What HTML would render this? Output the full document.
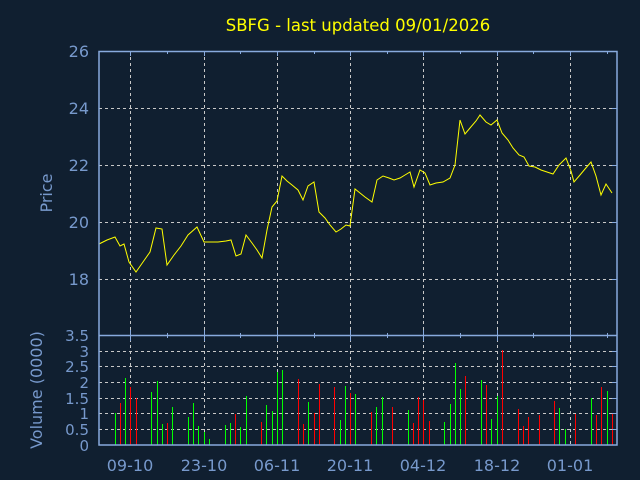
<!DOCTYPE html>
<html><head><meta charset="utf-8"><style>
html,body{margin:0;padding:0;background:#101f30;}
svg{display:block}
text{font-family:"DejaVu Sans","Liberation Sans",sans-serif;}
</style></head><body>
<svg width="640" height="480" viewBox="0 0 640 480" xmlns="http://www.w3.org/2000/svg">
<rect width="640" height="480" fill="#101f30"/>
<text x="358" y="31" fill="#ffff00" font-size="16.5" text-anchor="middle">SBFG - last updated 09/01/2026</text>
<g stroke="#c8c8c8" stroke-width="1" stroke-dasharray="3,3">
<path d="M99 108.5H617M99 165.5H617M99 222.5H617M99 279.5H617"/>
<path d="M99 351.5H617M99 366.5H617M99 382.5H617M99 398.5H617M99 413.5H617M99 429.5H617"/>
<path d="M130.5 51V445M204.5 51V445M277.5 51V445M350.5 51V445M423.5 51V445M497.5 51V445M570.5 51V445"/>
</g>
<g stroke="#00ff00" stroke-width="1">
<path d="M115.5 445V413M125.5 445V378M151.5 445V392M157.5 445V381M162.5 445V424M172.5 445V407M188.5 445V417M193.5 445V403M198.5 445V426M204.5 445V432M209.5 445V439M225.5 445V425M230.5 445V423M240.5 445V427M246.5 445V396M266.5 445V405M272.5 445V411M277.5 445V372M282.5 445V370M308.5 445V402M340.5 445V420M345.5 445V386M355.5 445V394M376.5 445V407M382.5 445V397M408.5 445V410M444.5 445V422M450.5 445V404M455.5 445V363M460.5 445V389M481.5 445V380M491.5 445V419M497.5 445V396M559.5 445V408M565.5 445V429M591.5 445V398M607.5 445V391"/>
</g>
<g stroke="#ff0000" stroke-width="1">
<path d="M120.5 445V403M130.5 445V387M136.5 445V398M167.5 445V423M235.5 445V414M261.5 445V422M298.5 445V379M303.5 445V424M314.5 445V413M319.5 445V384M334.5 445V387M350.5 445V393M371.5 445V412M392.5 445V407M413.5 445V423M418.5 445V397M423.5 445V400M429.5 445V421M465.5 445V376M486.5 445V385M502.5 445V350M518.5 445V409M523.5 445V426M528.5 445V417M539.5 445V415M554.5 445V401M575.5 445V414M596.5 445V415M601.5 445V387M612.5 445V414"/>
</g>
<polyline fill="none" stroke="#ffff00" stroke-width="1" points="99,244 107,240 115,237 120,246 124,244 129,262 136,272 143,262 150,252 156,228 162,229 167,265 174,255 181,246 188,235 197,227 204,242 211,242 218,242 226,241 231,240 236,256 241,254 246,235 252,243 257,250 262,258 267,230 272,207 277,201 282,176 287,181 292,185 298,190 303,200 308,186 314,182 319,212 325,218 330,225 336,232 341,229 346,225 350,226 355,189 360,193 365,197 372,202 377,180 383,176 389,178 394,180 400,178 405,175 410,172 414,187 420,170 425,173 430,185 436,183 443,182 450,178 455,165 460,120 465,134 470,128 476,121 480,115 486,122 491,125 497,120 502,133 508,140 513,148 519,155 524,157 529,166 535,167 541,170 547,172 553,174 559,165 566,158 571,171 574,182 580,175 585,169 591,162 596,176 601,195 606,184 612,193"/>
<g stroke="#88aadd" stroke-width="1.5" fill="none">
<rect x="99" y="51.5" width="518" height="393.5"/>
<path d="M99 335.5H617"/>
</g>
<g stroke="#88aadd" stroke-width="1">
<path d="M130.5 51V56M167.5 51V54M204.5 51V56M240.5 51V54M277.5 51V56M314.5 51V54M350.5 51V56M387.5 51V54M423.5 51V56M460.5 51V54M497.5 51V56M533.5 51V54M570.5 51V56M607.5 51V54"/>
<path d="M130.5 330V341M167.5 333V338M204.5 330V341M240.5 333V338M277.5 330V341M314.5 333V338M350.5 330V341M387.5 333V338M423.5 330V341M460.5 333V338M497.5 330V341M533.5 333V338M570.5 330V341M607.5 333V338"/>
<path d="M612 108.5H617M612 165.5H617M612 222.5H617M612 279.5H617M612 351.5H617M612 366.5H617M612 382.5H617M612 398.5H617M612 413.5H617M612 429.5H617"/>
</g>
<g fill="#7799cc" font-size="16" text-anchor="end">
<text x="89" y="57">26</text><text x="89" y="114">24</text><text x="89" y="171">22</text><text x="89" y="228">20</text><text x="89" y="285">18</text>
</g>
<g fill="#7799cc" font-size="15" text-anchor="end">
<text x="89" y="341">3.5</text><text x="89" y="357">3</text><text x="89" y="372">2.5</text><text x="89" y="388">2</text><text x="89" y="404">1.5</text><text x="89" y="419">1</text><text x="89" y="435">0.5</text><text x="89" y="451">0</text>
</g>
<g fill="#7799cc" font-size="16" text-anchor="middle">
<text x="130" y="471">09-10</text><text x="204" y="471">23-10</text><text x="277" y="471">06-11</text><text x="350" y="471">20-11</text><text x="423" y="471">04-12</text><text x="497" y="471">18-12</text><text x="570" y="471">01-01</text>
</g>
<text transform="translate(52,193) rotate(-90)" fill="#7799cc" font-size="16" text-anchor="middle">Price</text>
<text transform="translate(42,390) rotate(-90)" fill="#7799cc" font-size="16" text-anchor="middle">Volume (0000)</text>
</svg>
</body></html>
